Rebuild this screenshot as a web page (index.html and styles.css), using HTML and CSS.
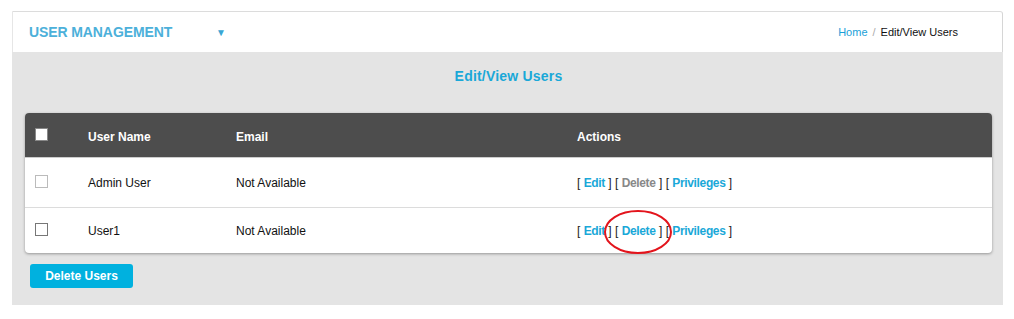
FILE: index.html
```html
<!DOCTYPE html>
<html>
<head>
<meta charset="utf-8">
<link rel="stylesheet" href="styles.css">
</head>
<body>
<div class="page">
  <div class="topbar">
    <div class="brand">USER MANAGEMENT <span class="caret">&#9660;</span></div>
    <div class="crumbs"><a class="crumb-link">Home</a><span class="sep">/</span><span class="crumb-cur">Edit/View Users</span></div>
  </div>
  <div class="content">
    <h1 class="title">Edit/View Users</h1>
    <div class="card">
      <div class="row head">
        <div class="cell"><span class="cb cb-head"></span></div>
        <div class="cell">User Name</div>
        <div class="cell">Email</div>
        <div class="cell">Actions</div>
      </div>
      <div class="row">
        <div class="cell"><span class="cb cb-light"></span></div>
        <div class="cell">Admin User</div>
        <div class="cell">Not Available</div>
        <div class="cell actions"><span class="br">[</span> <a class="act">Edit</a> <span class="br">]</span> <span class="br">[</span> <a class="act disabled">Delete</a> <span class="br">]</span> <span class="br">[</span> <a class="act">Privileges</a> <span class="br">]</span></div>
      </div>
      <div class="row last">
        <div class="cell"><span class="cb"></span></div>
        <div class="cell">User1</div>
        <div class="cell">Not Available</div>
        <div class="cell actions"><span class="br">[</span> <a class="act">Edit</a> <span class="br">]</span> <span class="br">[</span> <a class="act">Delete</a> <span class="br">]</span> <span class="br">[</span> <a class="act">Privileges</a> <span class="br">]</span></div>
      </div>
    </div>
    <button class="btn">Delete Users</button>
  </div>
  <svg class="annot" width="70" height="46" viewBox="0 0 70 46"><ellipse cx="35" cy="23" rx="33" ry="21" fill="none" stroke="#e3141c" stroke-width="2"/></svg>
</div>
</body>
</html>
```
FILE: styles.css
```css
html, body { margin: 0; padding: 0; background: #fff; }
body { font-family: "Liberation Sans", Arial, sans-serif; color: #111; }
.page { position: relative; margin: 11px 0 0 12px; width: 991px; }
.topbar {
  height: 40px;
  background: #fff;
  border-top: 1px solid #dcdcdc;
  border-left: 1px solid #e6e6e6;
  border-right: 1px solid #d6d6d6;
  border-top-right-radius: 3px;
  display: flex; align-items: center; justify-content: space-between;
  padding: 0 44px 0 16px;
  box-sizing: content-box;
  width: 929px;
}
.brand { font-size: 14px; font-weight: bold; color: #4cb0da; letter-spacing: -0.1px; }
.caret { font-size: 10px; margin-left: 40px; color: #3aa6d4; vertical-align: 1px; }
.crumbs { font-size: 11px; }
.crumb-link { color: #1a9fd8; }
.sep { color: #aaa; margin: 0 5px; }
.crumb-cur { color: #111; }
.content {
  background: #e4e4e4;
  padding: 16px 11px 17px 13px;
  width: 967px;
  box-sizing: content-box;
}
.title { margin: 0 0 28px; text-align: center; font-size: 14px; font-weight: bold; color: #1aa8d8; line-height: 17px; letter-spacing: 0.2px; }
.card {
  background: #fff; border-radius: 4px; overflow: hidden;
  box-shadow: 0 1px 3px rgba(0,0,0,0.35);
}
.row {
  display: grid; grid-template-columns: 63px 148px 341px 1fr;
  align-items: center; height: 49px; border-bottom: 1px solid #dcdcdc;
  font-size: 12px;
}
.row.last { border-bottom: 0; height: 45px; padding-top: 1px; box-sizing: border-box; }
.row.head { background: #4d4d4d; color: #fff; font-weight: bold; height: 45px; border-bottom: 1px solid #ccc; padding-top: 3px; box-sizing: border-box; }
.cell:first-child { padding-left: 10px; }
.cb { display: inline-block; width: 11px; height: 11px; border: 1px solid #777; background: #fff; vertical-align: middle; position: relative; top: -2px; }
.cb-head { border-color: #888; top: -3px; }
.cb-light { border-color: #bbb; }
.actions { color: #222; }
.act { color: #1aa8d8; font-weight: bold; letter-spacing: -0.35px; }
.act.disabled { color: #888; }
.br { color: #222; }
.btn {
  display: block; margin: 11px 0 0 5px; width: 103px; height: 24px;
  background: #00b1df; color: #fff; border: 0; border-radius: 3px;
  font-family: "Liberation Sans", Arial, sans-serif; font-size: 12px; font-weight: bold; padding: 0;
}
.annot { position: absolute; left: 591px; top: 198px; }
```
